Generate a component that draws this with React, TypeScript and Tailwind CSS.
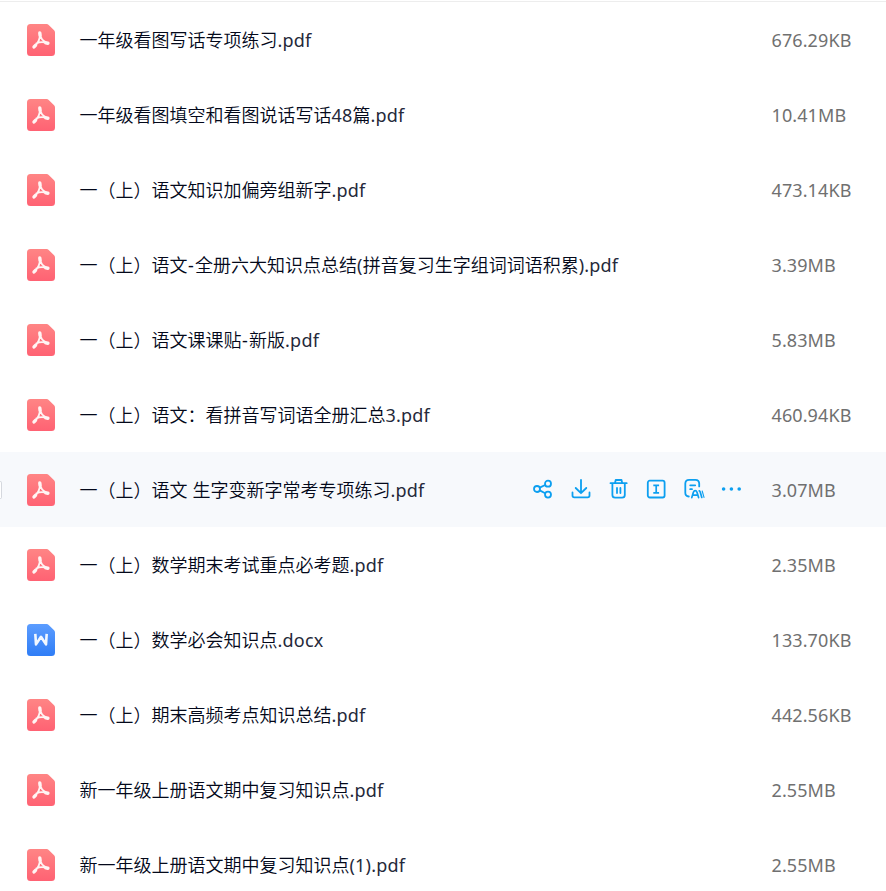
interface FileItem {
  name: string;
  size: string;
  type: 'pdf' | 'doc';
}

const files: FileItem[] = [
  { name: '一年级看图写话专项练习.pdf', size: '676.29KB', type: 'pdf' },
  { name: '一年级看图填空和看图说话写话48篇.pdf', size: '10.41MB', type: 'pdf' },
  { name: '一（上）语文知识加偏旁组新字.pdf', size: '473.14KB', type: 'pdf' },
  { name: '一（上）语文-全册六大知识点总结(拼音复习生字组词词语积累).pdf', size: '3.39MB', type: 'pdf' },
  { name: '一（上）语文课课贴-新版.pdf', size: '5.83MB', type: 'pdf' },
  { name: '一（上）语文：看拼音写词语全册汇总3.pdf', size: '460.94KB', type: 'pdf' },
  { name: '一（上）语文 生字变新字常考专项练习.pdf', size: '3.07MB', type: 'pdf' },
  { name: '一（上）数学期末考试重点必考题.pdf', size: '2.35MB', type: 'pdf' },
  { name: '一（上）数学必会知识点.docx', size: '133.70KB', type: 'doc' },
  { name: '一（上）期末高频考点知识总结.pdf', size: '442.56KB', type: 'pdf' },
  { name: '新一年级上册语文期中复习知识点.pdf', size: '2.55MB', type: 'pdf' },
  { name: '新一年级上册语文期中复习知识点(1).pdf', size: '2.55MB', type: 'pdf' },
];

const activeIndex = 6;

function FileIcon({ type }: { type: FileItem['type'] }) {
  const id = `fill-${type}`;
  const isPdf = type === 'pdf';
  return (
    <svg className="h-8 w-7 shrink-0" viewBox="0 0 28 32" fill="none">
      <defs>
        <linearGradient id={id} x1="0" y1="0" x2="0" y2="1">
          <stop stopColor={isPdf ? '#ff8585' : '#5c9dff'} />
          <stop offset="1" stopColor={isPdf ? '#ff6273' : '#2f7df6'} />
        </linearGradient>
      </defs>
      <path
        d="M3.5 0H19.6Q20.8 0 21.7 .9L27.1 6.3Q28 7.2 28 8.5V28.5Q28 32 24.5 32H3.5Q0 32 0 28.5V3.5Q0 0 3.5 0Z"
        fill={`url(#${id})`}
      />
      {isPdf ? (
        <g stroke="#fff5f4" strokeLinecap="round" strokeLinejoin="round">
          <path d="M12.9 9.3C13.2 13.4 15.4 17 20.2 18.9M12.9 9.3C13.2 14.5 11.2 19.4 7.3 22.6M9.4 19.4C12.4 17.8 16.4 17.7 20.2 18.9" strokeWidth="1.8" />
          <path d="M12.8 9L13.1 11.4M7 22.9L8.5 21.3M18.8 18.9L20.9 19.2" strokeWidth="3.4" />
        </g>
      ) : (
        <path d="M8.4 11.2L9 20.4L14 12.8L19 20.4L19.6 11.2" stroke="#f1f7ff" strokeWidth="2.6" strokeLinecap="square" strokeLinejoin="round" />
      )}
    </svg>
  );
}

function RowActions() {
  return (
    <div className="mb-0.5 flex shrink-0 items-center gap-[15.7px] text-[#0c9ff0]">
      <svg className="size-[22px]" viewBox="0 0 22 22" fill="none" stroke="currentColor" strokeWidth="1.8">
        <circle cx="5" cy="11" r="3" />
        <circle cx="16" cy="5.7" r="3" />
        <circle cx="16" cy="16.6" r="3" />
        <path d="M7.7 9.6L13.2 7M7.7 12.4L13.2 15.2" />
      </svg>
      <svg className="size-[22px]" viewBox="0 0 22 22" fill="none" stroke="currentColor" strokeWidth="1.8" strokeLinecap="round" strokeLinejoin="round">
        <path d="M11 2V15M5.7 10L11 15.2L16.3 10M2.5 14.5V17.5Q2.5 19.3 4.3 19.3H17.7Q19.5 19.3 19.5 17.5V14.5" />
      </svg>
      <svg className="size-[22px]" viewBox="0 0 22 22" fill="none" stroke="currentColor" strokeWidth="1.8" strokeLinecap="round" strokeLinejoin="round">
        <path d="M3.5 5.2H19.7M8 5L8.7 2H14.5L15.2 5M5.4 5.2V17Q5.4 19.7 8.1 19.7H15.1Q17.8 19.7 17.8 17V5.2M10 10V15M13.4 10V15" />
      </svg>
      <svg className="size-[22px]" viewBox="0 0 22 22" fill="none" stroke="currentColor" strokeWidth="1.8">
        <rect x="2.8" y="2.7" width="16.8" height="16.8" rx="2" />
        <path d="M8.3 7.4H14.1M11.2 7.4V14.8M8.3 14.8H14.1" strokeWidth="1.7" />
      </svg>
      <svg className="size-[22px]" viewBox="0 0 22 22" fill="none" stroke="currentColor" strokeWidth="1.8" strokeLinecap="round" strokeLinejoin="round">
        <path d="M5.8 18.5Q2.3 18.3 2.3 14.8V5.6Q2.3 1.8 6.1 1.8H12.4Q16.2 1.8 16.2 5.6V8.4M7.2 7.3H12.2M7.2 11.2H9" />
        <path d="M8.8 19.6L10.4 14.3Q11 12.7 12.2 12.7Q13.4 12.7 14 14.3L15.6 19.6M10.2 17.2H14.2M16.2 12.8Q17 13.2 17.3 14.2L18.8 19.4" strokeWidth="1.7" />
        <path d="M19.2 13L21 19.4" strokeWidth="1.1" />
      </svg>
      <svg className="size-[22px]" viewBox="0 0 22 22" fill="currentColor">
        <circle cx="2.6" cy="11" r="1.8" />
        <circle cx="10.4" cy="11" r="1.8" />
        <circle cx="18.2" cy="11" r="1.8" />
      </svg>
    </div>
  );
}

// Latin runs are set a step heavier than the Chinese text around them
function FileName({ name }: { name: string }) {
  const runs = name.split(/(-|[()\w. ]+)/).filter(Boolean);
  return (
    <span className="ml-[24.5px] flex-1 whitespace-nowrap text-[18px] leading-6 font-[350] text-[#03081a]">
      {runs.map((run, i) => {
        if (run === '-') return <span key={i} className="pl-[0.6px] font-normal tracking-[1.2px]">-</span>;
        if (/^[()\w. ]+$/.test(run)) return <span key={i} className="font-normal tracking-[0.2px] text-[#25293a]">{run}</span>;
        return run;
      })}
    </span>
  );
}

function FileRow({ file, active }: { file: FileItem; active: boolean }) {
  return (
    <li className={`flex h-[75px] items-center ${active ? 'bg-[#f7f9fc]' : ''}`}>
      <div className="w-[27px] shrink-0">
        {active && <div className="h-[18px] w-0.5 rounded-r-[3px] border-y border-r border-[#d5d8de] bg-white" />}
      </div>
      <FileIcon type={file.type} />
      <FileName name={file.name} />
      {active && <RowActions />}
      <span className="ml-[29px] w-[114.5px] shrink-0 text-[18px] leading-6 tracking-[0.1px] text-[#707070]">
        {file.size}
      </span>
    </li>
  );
}

export default function App() {
  return (
    <main
      lang="zh-CN"
      className="h-[891px] overflow-hidden bg-white pt-px font-['Noto_Sans','Noto_Sans_CJK_SC',sans-serif]"
    >
      <ul className="border-t border-[#ededed]">
        {files.map((file, index) => (
          <FileRow key={file.name} file={file} active={index === activeIndex} />
        ))}
      </ul>
    </main>
  );
}
